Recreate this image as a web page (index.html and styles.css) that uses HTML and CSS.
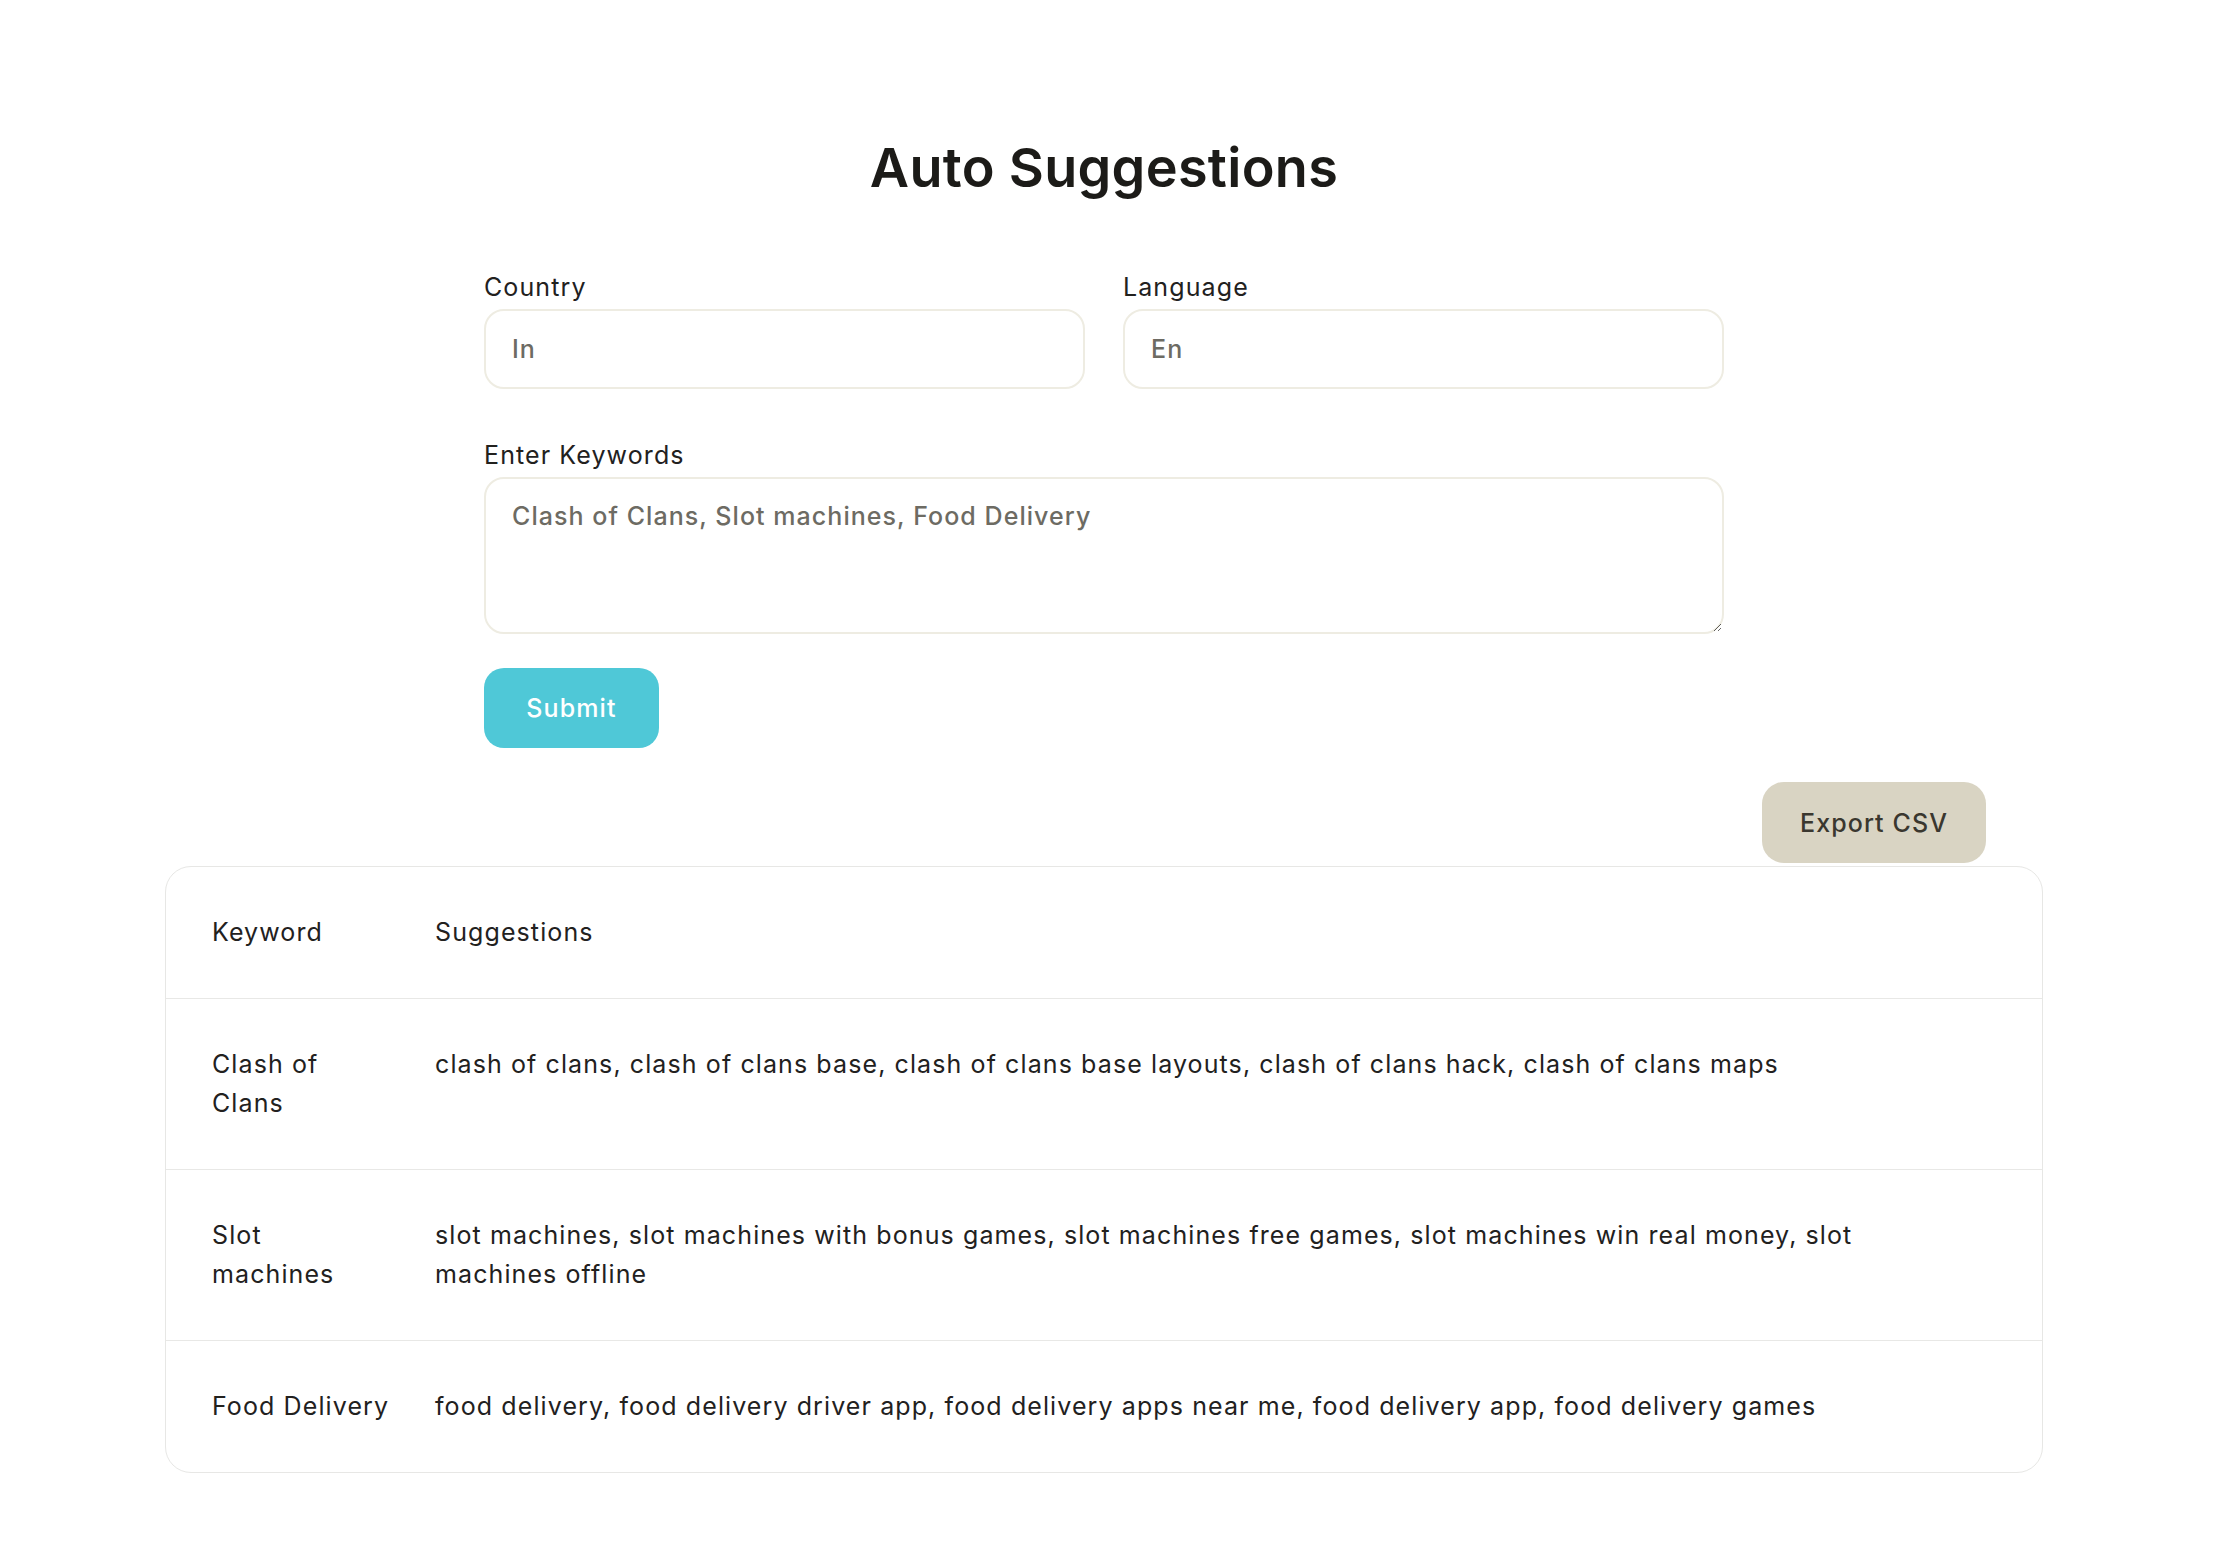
FILE: index.html
```html
<!DOCTYPE html>
<html lang="en">
<head>
<meta charset="utf-8">
<title>Auto Suggestions</title>
<link rel="stylesheet" href="styles.css">
</head>
<body>
<main class="page">
  <h1 class="title">Auto Suggestions</h1>
  <form class="form">
    <div class="pair">
      <div class="field">
        <label class="label" for="country">Country</label>
        <input class="input" id="country" type="text" value="In">
      </div>
      <div class="field">
        <label class="label" for="language">Language</label>
        <input class="input" id="language" type="text" value="En">
      </div>
    </div>
    <div class="field field-keywords">
      <label class="label" for="keywords">Enter Keywords</label>
      <textarea class="textarea" id="keywords">Clash of Clans, Slot machines, Food Delivery</textarea>
    </div>
    <button class="btn-submit" type="button">Submit</button>
  </form>

  <div class="export-row">
    <button class="btn-export" type="button">Export CSV</button>
  </div>

  <div class="table-card">
    <div class="trow thead">
      <div class="cell-key">Keyword</div>
      <div class="cell-sug">Suggestions</div>
    </div>
    <div class="trow">
      <div class="cell-key">Clash of Clans</div>
      <div class="cell-sug">clash of clans, clash of clans base, clash of clans base layouts, clash of clans hack, clash of clans maps</div>
    </div>
    <div class="trow">
      <div class="cell-key">Slot machines</div>
      <div class="cell-sug">slot machines, slot machines with bonus games, slot machines free games, slot machines win real money, slot machines offline</div>
    </div>
    <div class="trow">
      <div class="cell-key">Food Delivery</div>
      <div class="cell-sug">food delivery, food delivery driver app, food delivery apps near me, food delivery app, food delivery games</div>
    </div>
  </div>
</main>
</body>
</html>
```

FILE: styles.css
```css
* { box-sizing: border-box; }

html, body {
  margin: 0;
  padding: 0;
  background: #ffffff;
}

body {
  font-family: Inter, "Noto Sans", "DejaVu Sans", sans-serif;
  color: #1f1e1b;
  font-size: 25px;
  line-height: 39.6px;
  letter-spacing: 1.1px;
}

.page {
  width: 2208px;
  padding-bottom: 60px;
}

.title {
  margin: 132px 0 0;
  text-align: center;
  font-size: 54px;
  line-height: 72px;
  font-weight: 600;
  color: #1c1b18;
  letter-spacing: 0.3px;
}

.form {
  width: 1240px;
  margin: 63px auto 0;
}

.pair {
  display: grid;
  grid-template-columns: 1fr 1fr;
  column-gap: 38px;
}

.field {
  display: flex;
  flex-direction: column;
}

.field-keywords {
  margin-top: 46px;
}

.label {
  font-size: 25px;
  line-height: 40px;
  color: #22211e;
  margin-bottom: 2px;
}

.input,
.textarea {
  font-family: inherit;
  font-size: 25px;
  font-weight: 500;
  color: #6d6b63;
  border: 2px solid #eeece2;
  border-radius: 20px;
  background: #fff;
  outline: none;
  letter-spacing: 1.05px;
}

.input {
  height: 80px;
  padding: 0 26px;
  line-height: 40px;
}

.textarea {
  height: 157px;
  padding: 17px 26px;
  line-height: 40px;
  resize: vertical;
}

.btn-submit {
  display: block;
  margin-top: 34px;
  height: 80px;
  width: 175px;
  padding: 0;
  border: none;
  border-radius: 20px;
  background: #4fc8d7;
  color: #ffffff;
  font-family: inherit;
  font-size: 25px;
  font-weight: 500;
  line-height: 40px;
  letter-spacing: 1.1px;
}

.export-row {
  display: flex;
  justify-content: flex-end;
  margin: 34px 222px 0 0;
}

.btn-export {
  height: 81px;
  width: 224px;
  padding: 0;
  border: none;
  border-radius: 22px;
  background: #d9d4c3;
  color: #3a372f;
  font-family: inherit;
  font-size: 25px;
  font-weight: 500;
  line-height: 40px;
  letter-spacing: 1.1px;
}

.table-card {
  margin: 3px 165px 0;
  border: 1.5px solid #e7e7e5;
  border-radius: 26px;
  overflow: hidden;
}

.trow {
  display: grid;
  grid-template-columns: 178px 1fr;
  column-gap: 45px;
  padding: 46px 72px 45px 46px;
  border-top: 1.5px solid #e8e8e6;
  color: #22211e;
}

.trow.thead {
  border-top: none;
}
```
